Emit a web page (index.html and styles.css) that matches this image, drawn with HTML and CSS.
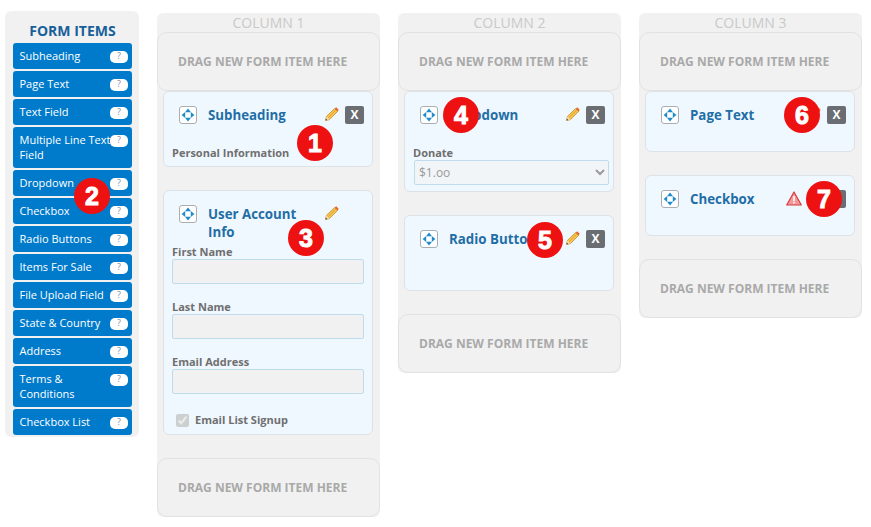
FILE: index.html
```html
<!DOCTYPE html>
<html lang="en">
<head>
<meta charset="utf-8">
<title>Form Builder</title>
<link rel="stylesheet" href="styles.css">
</head>
<body>
<svg class="defs" width="0" height="0" aria-hidden="true">
  <symbol id="move" viewBox="0 0 18 18">
    <rect x="0.5" y="0.5" width="17" height="17" rx="2.5" fill="#fff" stroke="#a8aeb2"/>
    <path d="M9 2.6 12 6.2H6zM9 15.4 6 11.8h6zM2.6 9 6.2 6v6zM15.4 9 11.8 12V6z" fill="#1e8ccc"/>
  </symbol>
  <symbol id="pencil" viewBox="0 0 14 14">
    <path d="M0.5 13.5 1.4 9.4 9.6 1.6 12.6 4.4 4.5 12.6z" fill="#f6c64e" stroke="#bd8a35" stroke-width="0.8"/>
    <path d="M3 10.9 10.6 3.2" stroke="#e8a030" stroke-width="1" fill="none"/>
    <path d="M9.8 1.5 11.2 0.3 13.7 2.8 12.6 4.4z" fill="#e8682a"/>
    <path d="M0.5 13.5 1.4 9.4 4.5 12.6z" fill="#f5dcae"/>
    <path d="M0.5 13.5 0.9 11.6 2.4 13.1z" fill="#5b4027"/>
  </symbol>
  <symbol id="warn" viewBox="0 0 16 15">
    <path d="M8 1 15.3 14H0.7z" fill="#f29a9a" stroke="#d9393f" stroke-width="1.2" stroke-linejoin="round"/>
    <path d="M7.2 5h1.6v5H7.2zM7.2 10.8h1.6v1.6H7.2z" fill="#fff"/>
  </symbol>
</svg>

<main class="builder">
  <aside class="sidebar">
    <h2 class="sidebar-title">FORM ITEMS</h2>
    <ul class="item-list">
      <li class="item"><span class="item-label">Subheading</span><span class="help">?</span></li>
      <li class="item"><span class="item-label">Page Text</span><span class="help">?</span></li>
      <li class="item"><span class="item-label">Text Field</span><span class="help">?</span></li>
      <li class="item"><span class="item-label">Multiple Line Text Field</span><span class="help">?</span></li>
      <li class="item"><span class="item-label">Dropdown</span><span class="help">?</span></li>
      <li class="item"><span class="item-label">Checkbox</span><span class="help">?</span></li>
      <li class="item"><span class="item-label">Radio Buttons</span><span class="help">?</span></li>
      <li class="item"><span class="item-label">Items For Sale</span><span class="help">?</span></li>
      <li class="item"><span class="item-label">File Upload Field</span><span class="help">?</span></li>
      <li class="item"><span class="item-label">State &amp; Country</span><span class="help">?</span></li>
      <li class="item"><span class="item-label">Address</span><span class="help">?</span></li>
      <li class="item"><span class="item-label">Terms &amp; Conditions</span><span class="help">?</span></li>
      <li class="item"><span class="item-label">Checkbox List</span><span class="help">?</span></li>
    </ul>
  </aside>

  <section class="column">
    <h3 class="column-title">COLUMN 1</h3>
    <div class="drop">DRAG NEW FORM ITEM HERE</div>
    <article class="card">
      <header class="card-head">
        <svg class="icon-move"><use href="#move"/></svg>
        <h4 class="card-title">Subheading</h4>
        <svg class="icon-pencil"><use href="#pencil"/></svg>
        <span class="remove">X</span>
      </header>
      <div class="field-label">Personal Information</div>
    </article>
    <article class="card">
      <header class="card-head">
        <svg class="icon-move"><use href="#move"/></svg>
        <h4 class="card-title">User Account Info</h4>
        <svg class="icon-pencil"><use href="#pencil"/></svg>
        <span class="remove is-hidden">X</span>
      </header>
      <div class="field">
        <label class="field-label">First Name</label>
        <input class="control" type="text" disabled>
      </div>
      <div class="field">
        <label class="field-label">Last Name</label>
        <input class="control" type="text" disabled>
      </div>
      <div class="field">
        <label class="field-label">Email Address</label>
        <input class="control" type="text" disabled>
      </div>
      <label class="check-row">
        <input class="check" type="checkbox" checked disabled>
        <span class="field-label">Email List Signup</span>
      </label>
    </article>
    <div class="drop">DRAG NEW FORM ITEM HERE</div>
  </section>

  <section class="column">
    <h3 class="column-title">COLUMN 2</h3>
    <div class="drop">DRAG NEW FORM ITEM HERE</div>
    <article class="card">
      <header class="card-head">
        <svg class="icon-move"><use href="#move"/></svg>
        <h4 class="card-title">Dropdown</h4>
        <svg class="icon-pencil"><use href="#pencil"/></svg>
        <span class="remove">X</span>
      </header>
      <label class="field-label">Donate</label>
      <select class="control control-select"><option>$1.oo</option></select>
    </article>
    <article class="card">
      <header class="card-head">
        <svg class="icon-move"><use href="#move"/></svg>
        <h4 class="card-title">Radio Buttons</h4>
        <svg class="icon-pencil"><use href="#pencil"/></svg>
        <span class="remove">X</span>
      </header>
      <div class="empty-body"></div>
    </article>
    <div class="drop">DRAG NEW FORM ITEM HERE</div>
  </section>

  <section class="column">
    <h3 class="column-title">COLUMN 3</h3>
    <div class="drop">DRAG NEW FORM ITEM HERE</div>
    <article class="card card-bare">
      <header class="card-head">
        <svg class="icon-move"><use href="#move"/></svg>
        <h4 class="card-title">Page Text</h4>
        <svg class="icon-pencil"><use href="#pencil"/></svg>
        <span class="remove">X</span>
      </header>
    </article>
    <article class="card card-bare">
      <header class="card-head">
        <svg class="icon-move"><use href="#move"/></svg>
        <h4 class="card-title">Checkbox</h4>
        <svg class="icon-warn"><use href="#warn"/></svg>
        <svg class="icon-pencil"><use href="#pencil"/></svg>
        <span class="remove">X</span>
      </header>
    </article>
    <div class="drop">DRAG NEW FORM ITEM HERE</div>
  </section>
</main>

<span class="badge badge-1">1</span>
<span class="badge badge-2">2</span>
<span class="badge badge-3">3</span>
<span class="badge badge-4">4</span>
<span class="badge badge-5">5</span>
<span class="badge badge-6">6</span>
<span class="badge badge-7">7</span>
</body>
</html>
```

FILE: styles.css
```css
* {
  box-sizing: border-box;
}

html,
body {
  margin: 0;
  padding: 0;
  background: #fff;
}

body {
  position: relative;
  height: 527px;
  overflow: hidden;
  font-family: "Open Sans", "Liberation Sans", sans-serif;
}

.defs {
  position: absolute;
}

.builder {
  display: flex;
  align-items: flex-start;
  padding: 11px 0 0 5px;
}

.sidebar {
  flex: none;
  width: 134px;
  height: 426px;
  margin-right: 18px;
  padding: 0 7px 0 8px;
  background: #f1f1f1;
  border-radius: 6px;
}

.sidebar-title {
  margin: 0;
  height: 32px;
  padding-top: 12px;
  font-size: 14px;
  line-height: 16px;
  font-weight: 700;
  text-align: center;
  color: #17609a;
}

.item-list {
  display: flex;
  flex-direction: column;
  gap: 2px;
  margin: 0;
  padding: 0;
  list-style: none;
}

.item {
  display: flex;
  align-items: flex-start;
  padding: 5px 4px 6px 6.5px;
  background: #007bcb;
  border-radius: 3px;
  color: #fff;
  font-size: 11px;
  line-height: 15px;
  font-weight: 400;
}

.item-label {
  flex: 1;
  min-width: 0;
  margin-right: -3px;
}

.help {
  flex: none;
  width: 18px;
  height: 12px;
  margin-top: 3px;
  background: #fff;
  border-radius: 5px;
  color: #8a8a9a;
  font-size: 9px;
  line-height: 10px;
  text-align: center;
}

.column {
  flex: none;
  width: 223px;
  margin-top: 2px;
  margin-right: 18px;
  background: #f1f1f1;
  border-radius: 6px;
}

.column-title {
  margin: 0;
  height: 19px;
  font-size: 14px;
  line-height: 20px;
  font-weight: 400;
  text-align: center;
  color: #c9c9c9;
}

.drop {
  height: 59px;
  padding-left: 20px;
  border: 1px solid #e2e2e2;
  border-radius: 10px;
  font-size: 12px;
  font-weight: 700;
  line-height: 57px;
  color: #a9a9a9;
}

.card {
  width: 210px;
  margin: 0 7px 23px 6px;
  padding: 14px 8px 6px;
  background: #f0f8ff;
  border: 1px solid #dde2e6;
  border-radius: 6px;
}

.card-bare {
  padding-bottom: 5px;
}

.card-head {
  display: flex;
  align-items: flex-start;
  min-height: 40px;
  padding-left: 7px;
}

.icon-move {
  flex: none;
  width: 18px;
  height: 18px;
  margin-right: 11px;
}

.card-title {
  flex: 1;
  min-width: 0;
  margin: 0 6px 0 0;
  font-size: 13.3px;
  line-height: 18px;
  font-weight: 700;
  color: #1f6ea6;
}

.icon-warn {
  flex: none;
  width: 16px;
  height: 15px;
  margin: 1px 5px 0 0;
}

.icon-pencil {
  flex: none;
  width: 14px;
  height: 14px;
  margin: 1px 6px 0 0;
}

.remove {
  flex: none;
  width: 19px;
  height: 18px;
  background: #6a6e72;
  border-radius: 2px;
  color: #fff;
  font-size: 12px;
  font-weight: 700;
  line-height: 18px;
  text-align: center;
}

.is-hidden {
  visibility: hidden;
}

.field {
  margin-bottom: 16px;
}

.field-label {
  display: block;
  font-size: 11px;
  line-height: 14px;
  font-weight: 700;
  color: #6f6f6f;
}

.control {
  display: block;
  width: 192px;
  height: 25px;
  margin: 0;
  padding: 0 6px;
  background: #f1f1f1;
  border: 1px solid #bfdcec;
  border-radius: 2px;
  opacity: 1;
}

.control-select {
  width: 195px;
  margin-left: 1px;
  padding: 0;
  background: #f1f5f7;
  font-family: "Open Sans", "Liberation Sans", sans-serif;
  font-size: 12px;
  color: #9a9a9a;
}

.empty-body {
  height: 14px;
}

.check-row {
  display: flex;
  align-items: center;
  height: 18px;
  padding: 2px 0 0 4px;
}

.check {
  flex: none;
  width: 13px;
  height: 13px;
  margin: 0 6px 0 0;
}

.badge {
  position: absolute;
  width: 36px;
  height: 36px;
  background: #ee1111;
  border-radius: 50%;
  color: #fff;
  font-family: "Liberation Sans", sans-serif;
  font-size: 25px;
  font-weight: 700;
  line-height: 36px;
  text-align: center;
  -webkit-text-stroke: 1px #fff;
}

.badge-1 { left: 297px; top: 125px; }
.badge-2 { left: 74px; top: 178px; }
.badge-3 { left: 288px; top: 220px; }
.badge-4 { left: 443px; top: 97px; }
.badge-5 { left: 527px; top: 222px; }
.badge-6 { left: 784px; top: 97px; }
.badge-7 { left: 806px; top: 181px; }
```
